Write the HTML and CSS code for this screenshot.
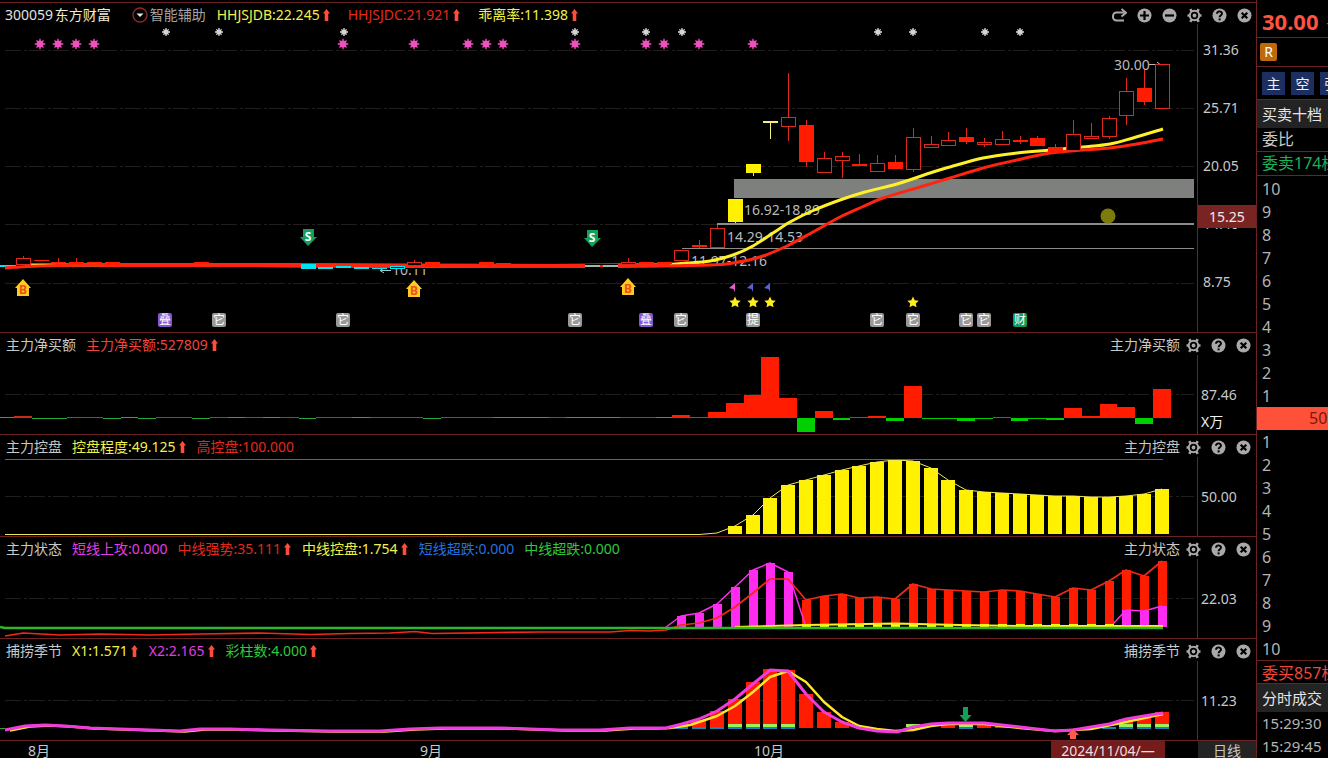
FILE: index.html
```html
<!DOCTYPE html>
<html lang="zh-CN">
<head>
<meta charset="utf-8">
<title>300059 东方财富</title>
<link rel="stylesheet" href="styles.css">
</head>
<body>
<svg class="defs" aria-hidden="true">
  <defs>
    <symbol id="i-up" viewBox="0 0 9 12"><path d="M4.500 0 8 4.500H6.300V12H2.700V4.500H1Z" fill="#ff4c3d"/></symbol>
    <symbol id="i-redo" viewBox="0 0 15 15"><path d="M12 12.500H4.500A3.500 3.500 0 0 1 1 9V8A3.500 3.500 0 0 1 4.500 4.600H12" fill="none" stroke="currentColor" stroke-width="2"/><path d="M9.500 1 14 4.700 9.500 8.500" fill="none" stroke="currentColor" stroke-width="2"/></symbol>
    <symbol id="i-plus" viewBox="0 0 15 15"><circle cx="7.500" cy="7.500" r="7" fill="currentColor"/><path d="M7.500 3V12M3 7.500H12" stroke="#000" stroke-width="2.200"/></symbol>
    <symbol id="i-minus" viewBox="0 0 15 15"><circle cx="7.500" cy="7.500" r="7" fill="currentColor"/><path d="M3 7.500H12" stroke="#000" stroke-width="2.200"/></symbol>
    <symbol id="i-gear" viewBox="0 0 15 15"><circle cx="7.500" cy="7.500" r="4.700" fill="none" stroke="currentColor" stroke-width="2"/><path d="M4.600 3.400 3.300 1.200M10.400 3.400 11.700 1.200M4.600 11.600 3.300 13.800M10.400 11.600 11.700 13.800M2.800 7.500H.5M12.200 7.500H14.500" stroke="currentColor" stroke-width="2.600"/><circle cx="7.500" cy="7.500" r="1.900" fill="currentColor"/></symbol>
    <symbol id="i-help" viewBox="0 0 15 15"><circle cx="7.500" cy="7.500" r="7" fill="currentColor"/><path d="M5 5.800C5 2.600 10 2.600 10 5.600 10 7.300 7.600 7.300 7.600 9.300" fill="none" stroke="#000" stroke-width="1.900"/><rect x="6.600" y="10.400" width="2" height="2" fill="#000"/></symbol>
    <symbol id="i-close" viewBox="0 0 15 15"><circle cx="7.500" cy="7.500" r="7" fill="currentColor"/><path d="M4.700 4.700 10.300 10.300M10.300 4.700 4.700 10.300" stroke="#000" stroke-width="2.200"/></symbol>
    <symbol id="i-drop" viewBox="0 0 16 16"><circle cx="8" cy="8" r="7" fill="none" stroke="#8e2626" stroke-width="1.400"/><path d="M4.500 6.500H11.500L8 10Z" fill="#e8e8e8"/></symbol>
  </defs>
</svg>
<div class="app">
  <main class="charts">
    <section class="panel main-panel">
      <header class="head">
        <h1 class="code">300059 <span class="name">东方财富</span></h1>
        <button class="assist" type="button"><svg class="drop"><use href="#i-drop"/></svg>智能辅助</button>
        <span class="c-yellow">HHJSJDB:22.245<svg class="up"><use href="#i-up"/></svg></span>
        <span class="c-red">HHJSJDC:21.921<svg class="up"><use href="#i-up"/></svg></span>
        <span class="c-yellow">乖离率:11.398<svg class="up"><use href="#i-up"/></svg></span>
        <div class="tools">
          <button type="button" aria-label="撤销"><svg><use href="#i-redo"/></svg></button>
          <button type="button" aria-label="放大"><svg><use href="#i-plus"/></svg></button>
          <button type="button" aria-label="缩小"><svg><use href="#i-minus"/></svg></button>
          <button type="button" aria-label="设置"><svg><use href="#i-gear"/></svg></button>
          <button type="button" aria-label="帮助"><svg><use href="#i-help"/></svg></button>
          <button type="button" aria-label="关闭"><svg><use href="#i-close"/></svg></button>
        </div>
      </header>
      <div class="body">
        <svg class="plot" id="kline" viewBox="0 24 1197 308"></svg>
        <div class="axis"><span>31.36</span><span>25.71</span><span>20.05</span><span>14.40</span><span>8.75</span><b class="cursor">15.25</b></div>
      </div>
    </section>
    <section class="panel">
      <header class="head">
        <h2>主力净买额</h2>
        <span class="c-light">主力净买额:527809<svg class="up"><use href="#i-up"/></svg></span>
        <div class="tools"><span>主力净买额</span>
          <button type="button" aria-label="设置"><svg><use href="#i-gear"/></svg></button>
          <button type="button" aria-label="帮助"><svg><use href="#i-help"/></svg></button>
          <button type="button" aria-label="关闭"><svg><use href="#i-close"/></svg></button>
        </div>
      </header>
      <div class="body">
        <svg class="plot" id="netbuy" viewBox="0 355 1197 79"></svg>
        <div class="axis"><span>87.46</span><span class="unit">X万</span></div>
      </div>
    </section>
    <section class="panel">
      <header class="head">
        <h2>主力控盘</h2>
        <span class="c-yellow">控盘程度:49.125<svg class="up"><use href="#i-up"/></svg></span>
        <span class="c-red">高控盘:100.000</span>
        <div class="tools"><span>主力控盘</span>
          <button type="button" aria-label="设置"><svg><use href="#i-gear"/></svg></button>
          <button type="button" aria-label="帮助"><svg><use href="#i-help"/></svg></button>
          <button type="button" aria-label="关闭"><svg><use href="#i-close"/></svg></button>
        </div>
      </header>
      <div class="body">
        <svg class="plot" id="control" viewBox="0 457 1197 79"></svg>
        <div class="axis"><span>50.00</span></div>
      </div>
    </section>
    <section class="panel">
      <header class="head">
        <h2>主力状态</h2>
        <span class="c-magenta">短线上攻:0.000</span>
        <span class="c-red">中线强势:35.111<svg class="up"><use href="#i-up"/></svg></span>
        <span class="c-yellow">中线控盘:1.754<svg class="up"><use href="#i-up"/></svg></span>
        <span class="c-blue">短线超跌:0.000</span>
        <span class="c-green">中线超跌:0.000</span>
        <div class="tools"><span>主力状态</span>
          <button type="button" aria-label="设置"><svg><use href="#i-gear"/></svg></button>
          <button type="button" aria-label="帮助"><svg><use href="#i-help"/></svg></button>
          <button type="button" aria-label="关闭"><svg><use href="#i-close"/></svg></button>
        </div>
      </header>
      <div class="body">
        <svg class="plot" id="state" viewBox="0 559 1197 79"></svg>
        <div class="axis"><span>22.03</span></div>
      </div>
    </section>
    <section class="panel">
      <header class="head">
        <h2>捕捞季节</h2>
        <span class="c-yellow">X1:1.571<svg class="up"><use href="#i-up"/></svg></span>
        <span class="c-magenta">X2:2.165<svg class="up"><use href="#i-up"/></svg></span>
        <span class="c-green">彩柱数:4.000<svg class="up"><use href="#i-up"/></svg></span>
        <div class="tools"><span>捕捞季节</span>
          <button type="button" aria-label="设置"><svg><use href="#i-gear"/></svg></button>
          <button type="button" aria-label="帮助"><svg><use href="#i-help"/></svg></button>
          <button type="button" aria-label="关闭"><svg><use href="#i-close"/></svg></button>
        </div>
      </header>
      <div class="body">
        <svg class="plot" id="season" viewBox="0 661 1197 79"></svg>
        <div class="axis"><span>11.23</span></div>
      </div>
    </section>
    <footer class="dates">
      <span>8月</span><span>9月</span><span>10月</span><span class="today">2024/11/04/—</span><span></span><button class="period" type="button">日线</button>
    </footer>
  </main>
  <aside class="side">
    <div class="price">30.00 <small>+</small></div>
    <div class="badges"><span class="r">R</span></div>
    <div class="tabs"><button type="button">主</button><button type="button">空</button><button type="button">强</button></div>
    <h3 class="side-title">买卖十档</h3>
    <div class="ratio">委比</div>
    <div class="sell">委卖174档</div>
    <ol class="levels asks"><li>10</li><li>9</li><li>8</li><li>7</li><li>6</li><li>5</li><li>4</li><li>3</li><li>2</li><li>1</li></ol>
    <div class="band">50</div>
    <ol class="levels"><li>1</li><li>2</li><li>3</li><li>4</li><li>5</li><li>6</li><li>7</li><li>8</li><li>9</li><li>10</li></ol>
    <div class="buy">委买857档</div>
    <h3 class="side-title">分时成交</h3>
    <ol class="ticks"><li>15:29:30</li><li>15:29:45</li></ol>
  </aside>
</div>
<script src="charts.js"></script>
</body>
</html>
```

FILE: styles.css
```css
* { box-sizing: border-box; }
body {
  margin: 0;
  background: #000;
  color: #c8c8c8;
  font: 14px/20px "Noto Sans", "Noto Sans CJK SC", sans-serif;
  overflow: hidden;
}
h1, h2, h3, ol { margin: 0; padding: 0; font: inherit; list-style: none; }
button { margin: 0; padding: 0; border: 0; background: none; color: inherit; font: inherit; }
.defs { position: absolute; width: 0; height: 0; }
.app { display: grid; grid-template-columns: minmax(0, 1fr) 72px; min-height: 100vh; }
.charts { padding-top: 2px; }

.panel { border-bottom: 1px solid #6b2323; }
.main-panel { border-top: 1px solid #6b2323; }
.head {
  display: flex;
  align-items: center;
  gap: 10px;
  height: 22px;
  padding: 2px 5px 0 6px;
  white-space: nowrap;
}
.main-panel .head { height: 21px; gap: 17px; padding: 3px 4px 0 5px; }
.code { margin-right: 4px; word-spacing: -2px; color: #e2e2e2; }
.name { color: #f3ead2; }
.assist, .head > span { display: flex; align-items: center; }
.assist { gap: 2px; margin-right: -6px; color: #a2a2a2; }
.drop { width: 16px; height: 16px; }
.up { width: 9px; height: 12px; margin-left: 2px; }
.tools { display: flex; align-items: center; gap: 10px; margin-left: auto; color: #a9a9a9; }
.tools span { margin-right: -4px; color: #c8c8c8; }
.tools button, .tools svg { display: block; width: 15px; height: 15px; }
.c-yellow { color: #f1f14a; }
.c-red { color: #e2291d; }
.c-light { color: #f0453c; }
.c-magenta { color: #e43ce4; }
.c-blue { color: #2472e0; }
.c-green { color: #2fc93b; }

.body { display: grid; grid-template-columns: minmax(0, 1fr) 59px; }
.plot { display: block; width: 100%; }
.axis {
  position: relative;
  display: flex;
  flex-direction: column;
  gap: 7px;
  padding: 30px 0 0 3px;
  border-left: 1px solid #6b2323;
}
.main-panel .axis { gap: 38px; padding: 16px 0 0 5px; }
.unit { color: #f0f0f0; }
.cursor {
  position: absolute;
  top: 181px;
  left: 0;
  right: 0;
  background: #7a2323;
  color: #f2e6e6;
  font-weight: normal;
  line-height: 23px;
  text-align: center;
}
.dates {
  display: grid;
  grid-template-columns: 392fr 334fr 297fr 114px 33fr 58px;
  height: 17px;
  padding-left: 28px;
  line-height: 20px;
}
.today { background: #741c1c; color: #f0dcdc; text-align: center; }
.period { background: #242424; line-height: 20px; }

.plot text { fill: #b9b9b9; }
.plot .tag { fill: #fff; font-size: 12px; text-anchor: middle; }
.plot .mark { font-size: 12px; font-weight: bold; text-anchor: middle; }
.plot .sell-mark { fill: #fff; }
.plot .buy-mark { fill: #f0501a; }

.side {
  border-left: 1px solid #6b2323;
  overflow: hidden;
  white-space: nowrap;
  font-size: 16px;
  line-height: 23px;
}
.side > div, .side-title { padding-left: 5px; }
.side > .price {
  height: 38px;
  padding-top: 5px;
  border-bottom: 1px solid #6b2323;
  color: #ff5240;
  font-size: 22px;
  font-weight: bold;
  line-height: 32px;
}
.price small { margin-left: 2px; font-size: 16px; font-weight: normal; }
.side > .badges { height: 29px; padding: 5px 0 0 3px; border-bottom: 1px solid #6b2323; }
.r {
  display: block;
  width: 17px;
  background: #bd6a0b;
  color: #fff;
  border-radius: 2px;
  font-size: 14px;
  line-height: 18px;
  text-align: center;
}
.tabs { display: flex; gap: 6px; height: 33px; padding-top: 5px; border-bottom: 1px solid #6b2323; }
.tabs button { flex: none; width: 23px; height: 23px; background: #1d2f60; color: #f0f0f0; font-size: 14px; }
.side-title { background: #232323; color: #e6e6e6; font-size: 15px; line-height: 28px; }
.ratio { height: 24px; border-bottom: 1px solid #6b2323; }
.sell { height: 24px; border-bottom: 1px solid #6b2323; color: #16b45a; }
.levels li, .ticks li { padding-left: 5px; color: #b4b4b4; }
.levels li { height: 23px; line-height: 25px; }
.asks { padding-top: 1px; }
.side > .band { padding-left: 52px; background: #ff5039; color: #7a1710; line-height: 23px; }
.buy { height: 24px; border-top: 1px solid #6b2323; border-bottom: 1px solid #6b2323; color: #f2463a; line-height: 24px; }
.ticks { font-size: 15px; }
```

FILE: charts.js
```js
const NS = 'http://www.w3.org/2000/svg';
const RED = '#ff1c00', YELLOW = '#fff100', MAGENTA = '#ff2cf0', GREEN = '#00d000', CYAN = '#00e5f5', LINE = '#e0281c';
const X = i => Math.round(22.8 + 17.8 * i);

function add(svg, tag, attrs, text) {
  const el = document.createElementNS(NS, tag);
  for (const k in attrs) el.setAttribute(k, attrs[k]);
  if (text) el.textContent = text;
  svg.appendChild(el);
}
const rect = (s, x, y, w, h, fill) => add(s, 'rect', { x, y, width: w, height: h, fill });
const path = (s, d, fill) => add(s, 'path', { d, fill });
const line = (s, pts, stroke, width) =>
  add(s, 'polyline', { points: pts, fill: 'none', stroke, 'stroke-width': width, 'stroke-linejoin': 'round' });
const text = (s, x, y, str, cls) => add(s, 'text', { x, y, class: cls || '' }, str);
const grid = (s, y) =>
  add(s, 'path', { d: `M5 ${y + .5}H1194`, stroke: '#221e1b', 'stroke-dasharray': '16 3 3 2' });

function smooth(svg, pts, stroke, width) {
  let d = `M${pts[0]}`;
  for (let i = 0; i < pts.length - 1; i++) {
    const a = pts[i - 1] || pts[i], b = pts[i], c = pts[i + 1], e = pts[i + 2] || c;
    d += `C${b[0] + (c[0] - a[0]) / 6} ${b[1] + (c[1] - a[1]) / 6} ${c[0] - (e[0] - b[0]) / 6} ${c[1] - (e[1] - b[1]) / 6} ${c}`;
  }
  add(svg, 'path', { d, fill: 'none', stroke, 'stroke-width': width });
}

function spark(svg, x, y, r, color) {
  const k = r * .66;
  add(svg, 'path', {
    d: `M${x} ${y - r}V${y + r}M${x - r} ${y}H${x + r}M${x - k} ${y - k}L${x + k} ${y + k}M${x + k} ${y - k}L${x - k} ${y + k}`,
    stroke: color, 'stroke-width': 1.3
  });
  add(svg, 'circle', { cx: x, cy: y, r: r * .64, fill: color });
}

// Price panel
const k = document.getElementById('kline');
[50, 108, 166, 224, 283].forEach(y => grid(k, y));
rect(k, 734, 179, 460, 19, '#7e807e');
rect(k, 717, 223, 477, 2, '#8c8c8c');
rect(k, 682, 248, 512, 1, '#8c8c8c');
text(k, 744, 215, '16.92-18.89');
text(k, 727, 242, '14.29-14.53');
text(k, 691, 266, '11.97-12.16');
text(k, 1114, 70, '30.00');
add(k, 'path', { d: 'M1149 64.500H1160M1157 62 1160 64.500 1157 67', stroke: '#b9b9b9', fill: 'none' });
text(k, 392, 275, '10.11');
rect(k, 390, 262, 40, 7, '#000');
add(k, 'path', { d: 'M391 270.500H380M384 268 380 270.500 384 273', stroke: '#9fc8cc', fill: 'none' });

line(k, '0,266 16,266', CYAN, 2);
smooth(k, [[30, 265], [60, 265], [110, 265], [400, 266], [640, 265], [687, 263], [710, 261], [733, 255], [753, 246], [773, 233], [790, 222], [812, 211], [840, 200], [865, 192], [897, 184], [933, 172], [950, 167], [983, 158], [1017, 153], [1050, 150], [1083, 147], [1110, 144], [1133, 138], [1163, 129]], '#fff02a', 3);
smooth(k, [[5, 268], [40, 266], [100, 265], [300, 265], [450, 266], [640, 266], [710, 265], [733, 263], [760, 257], [787, 246], [813, 232], [840, 217], [862, 207], [883, 198], [920, 187], [950, 178], [983, 168], [1017, 160], [1050, 153], [1083, 150], [1110, 148], [1137, 144], [1163, 139]], '#ff2410', 3);
line(k, '100,265 300,265 420,265.5 585,266', '#ff2410', 4);
line(k, '618,266 670,265', '#ff2410', 4);
rect(k, 585, 264, 33, 4, '#000');
rect(k, 585, 265, 33, 2, '#9ab8b0');
rect(k, 600, 265, 3, 2, RED);

// [index, top, bottom, high, low, style]: h hollow, f filled, y yellow, c cyan
[[0, 258, 265, 256, 265, 'h'], [1, 260, 261, 260, 261, 'f'], [2, 262, 263, 258, 263, 'f'], [3, 262, 264, 258, 264, 'f'], [4, 262, 263, 262, 263, 'f'],
 [5, 262, 265, 262, 265, 'f'], [10, 262, 264, 262, 264, 'f'],
 [16, 264, 269, 264, 269, 'c'], [17, 267, 269, 267, 269, 'c'], [18, 266, 268, 266, 268, 'c'], [19, 267, 269, 267, 269, 'c'], [20, 268, 269, 268, 269, 'c'], [21, 266, 269, 266, 269, 'k'],
 [22, 262, 266, 260, 266, 'h'], [23, 262, 267, 262, 267, 'f'], [26, 262, 265, 262, 265, 'f'], [27, 263, 266, 263, 266, 'f'],
 [34, 262, 265, 258, 265, 'h'], [35, 262, 264, 262, 264, 'f'], [36, 262, 264, 262, 264, 'f'], [37, 250, 261, 250, 261, 'h'], [38, 245, 247, 240, 248, 'f'],
 [39, 228, 248, 225, 248, 'h'], [40, 199, 222, 199, 223, 'y'], [41, 164, 173, 164, 176, 'y'], [42, 121, 123, 121, 139, 't'],
 [43, 117, 127, 73, 141, 'h'], [44, 125, 162, 120, 167, 'f'], [45, 158, 173, 152, 173, 'h'], [46, 156, 161, 152, 178, 'h'],
 [47, 164, 166, 154, 166, 'f'], [48, 163, 172, 155, 172, 'h'], [49, 162, 169, 155, 169, 'f'], [50, 137, 170, 128, 172, 'h'],
 [51, 144, 148, 136, 148, 'h'], [52, 140, 146, 132, 146, 'h'], [53, 137, 142, 128, 144, 'f'], [54, 142, 145, 138, 147, 'h'],
 [55, 139, 145, 131, 145, 'h'], [56, 140, 142, 136, 144, 'f'], [57, 138, 146, 136, 146, 'f'], [58, 147, 153, 144, 153, 'f'],
 [59, 134, 151, 120, 151, 'h'], [60, 136, 139, 123, 139, 'h'], [61, 118, 137, 116, 139, 'h'], [62, 91, 116, 78, 125, 'h'],
 [63, 88, 102, 70, 105, 'f'], [64, 64, 109, 64, 109, 'h']
].forEach(([i, top, bottom, high, low, style]) => {
  const x = X(i);
  const color = { h: LINE, f: RED, y: YELLOW, c: CYAN, k: CYAN, t: '#f4ee7a' }[style];
  if (low - high > bottom - top) rect(k, x, high, 1, low - high, style === 'f' ? LINE : color);
  if (style === 'h' || style === 'k')
    add(k, 'rect', { x: x - 6.5, y: top + .5, width: 14, height: bottom - top - 1, fill: '#000', stroke: color });
  else rect(k, x - 7, top, 15, bottom - top, color);
});
add(k, 'circle', { cx: 1108, cy: 216, r: 7.5, fill: '#7d7b0c' });

[166, 219, 344, 575, 646, 682, 878, 913, 985, 1020].forEach(x => spark(k, x, 32, 4, '#d4d4d4'));
[40, 58, 76, 94, 343, 414, 468, 486, 503, 575, 646, 664, 699, 753].forEach(x => spark(k, x, 44, 5.3, '#ee50be'));

[[308, 237], [592, 238]].forEach(([x, y]) => {
  path(k, `M${x - 5} ${y - 8}H${x + 6}V${y}H${x + 9}L${x} ${y + 9}L${x - 8} ${y}H${x - 5}Z`, '#12a05c');
  text(k, x, y + 4, 'S', 'mark sell-mark');
});
[[23, 288], [414, 289], [628, 287]].forEach(([x, y]) => {
  path(k, `M${x} ${y - 9}L${x + 8} ${y}H${x + 6}V${y + 8}H${x - 6}V${y}H${x - 8}Z`, '#ffcb20');
  text(k, x, y + 6, 'B', 'mark buy-mark');
});
[735, 753, 770, 913].forEach(x => {
  let d = 'M';
  for (let n = 0; n < 10; n++) {
    const a = -Math.PI / 2 + n * Math.PI / 5, r = n % 2 ? 2.9 : 6;
    d += `${x + r * Math.cos(a)} ${302.5 + r * Math.sin(a)} `;
  }
  path(k, d + 'Z', '#ffee1c');
});
[[730, '#e45fd0'], [748, '#5a62d8'], [765, '#5a62d8']].forEach(([x, c]) =>
  path(k, `M${x + 5} 283V292L${x + 3.5} 289L${x - 1} 288Z`, c));

[[165, '叠', '#8257cf'], [219, '它', '#999'], [343, '它', '#999'], [575, '它', '#999'], [646, '叠', '#8257cf'], [681, '它', '#999'],
 [753, '提', '#999'], [877, '它', '#999'], [913, '它', '#999'], [966, '它', '#999'], [984, '它', '#999'], [1020, '财', '#0f9d5a']
].forEach(([x, s, c]) => {
  add(k, 'rect', { x: x - 7, y: 313, width: 14, height: 14, rx: 2, fill: c });
  text(k, x, 324, s, 'tag');
});

// Net buying
const n = document.getElementById('netbuy');
grid(n, 394);
[[0, 14, 'g', 0], [14, 32, 'r', -1], [32, 67, 'g', 1], [67, 103, 'r', 0], [103, 121, 'g', 1], [121, 138, 'g', 0], [138, 156, 'g', 1],
 [156, 192, 'r', 0], [192, 210, 'g', 1], [210, 228, 'r', 0], [228, 245, 'g', 0], [245, 263, 'r', 0], [263, 280, 'g', 0], [280, 299, 'r', 0],
 [299, 316, 'g', 1], [316, 352, 'r', 0], [352, 370, 'g', 0], [370, 423, 'r', 0], [423, 441, 'g', 1], [441, 493, 'r', 0], [493, 549, 'g', 0],
 [549, 566, 'r', 0], [566, 620, 'g', 0], [620, 656, 'r', 0], [656, 673, 'g', 0]
].forEach(([a, b, c, o]) => rect(n, a, 417 + o, b - a, o < 0 ? 2 : 1, c === 'g' ? '#28a83a' : '#c92a1e'));
[415, 417, 412, 403, 395, 357, 398, 432, 411, 420, 417, 416, 421, 386, 419, 419, 421, 419, 417, 421, 419, 420, 408, 416, 404, 407, 424, 389]
  .forEach((y, j) => {
    const x = X(37 + j) - 9, w = X(38 + j) - X(37 + j);
    if (y < 418) rect(n, x, y, w, 418 - y, RED);
    else rect(n, x, 418, w, y - 418, GREEN);
  });

// Control degree
const c = document.getElementById('control');
grid(c, 496);
const degree = [526, 515, 498, 485, 480, 475, 470, 466, 462, 460, 461, 468, 480, 490, 492, 493, 494, 495, 496, 496, 497, 497, 496, 494, 489];
degree.forEach((y, j) => rect(c, X(40 + j) - 7, y, 14, 534 - y, YELLOW));
line(c, '5,534.5 699,534.5 717,533 ' + degree.map((y, j) => `${X(40 + j)},${y}`).join(' '), '#f0e860', 1);
rect(c, 5, 459, 1158, 1, '#e8301e');

// Strength state
const s = document.getElementById('state');
grid(s, 598);
const rise = [616, 613, 604, 587, 570, 563, 572];
rise.forEach((y, j) => rect(s, X(37 + j) - 4, y, 9, 627 - y, MAGENTA));
const strong = [600, 596, 594, 598, 597, 599, 584, 589, 590, 591, 592, 590, 591, 594, 597, 588, 590, 581, 570, 576, 561];
strong.forEach((y, j) => rect(s, X(44 + j) - 4, y, 9, 626 - y, RED));
[[62, 610], [63, 611], [64, 606]].forEach(([i, y]) => rect(s, X(i) - 4, y, 9, 627 - y, MAGENTA));
line(s, '666,627 ' + rise.map((y, j) => `${X(37 + j)},${y}`).join(' ') + ' 806,627', MAGENTA, 1.5);
line(s, '1113,624 1126,610 1144,611 1162,606', MAGENTA, 1.5);
line(s, '5,636 23,633 60,635 100,634 150,635 200,634 260,633 310,634.5 350,633.5 390,633 415,631.5 432,633.5 540,632 610,632 630,630.5 650,631 666,630 681,625 699,623 717,618 735,607 753,593 770,579 788,579 '
  + strong.map((y, j) => `${X(44 + j)},${y}`).join(' '), '#f02a14', 1.7);
for (let i = 44; i < 62; i++) rect(s, X(i) - 4, 624, 9, 3, '#f6ff00');
line(s, '735,627 770,626 806,625 895,623.5 960,625 1020,626 1163,626', '#ffee20', 2);
line(s, '0,627 5,628 1163,628', '#2fb62a', 2.6);

// Season
const p = document.getElementById('season');
grid(p, 700);
[[37, 725], [38, 720], [39, 711], [40, 699], [41, 682], [42, 669], [43, 670], [44, 694], [45, 712], [46, 722], [52, 724], [54, 724], [55, 725], [62, 719], [63, 716], [64, 712]]
  .forEach(([i, y]) => rect(p, X(i) - 7, y, 14, 728 - y, RED));
[37, 38, 39, 40, 41, 42, 43, 53, 61, 62, 63, 64].forEach(i => rect(p, X(i) - 7, 727, 14, 2, '#1585b5'));
[40, 41, 42, 43, 50, 53, 62, 63, 64].forEach(i => rect(p, X(i) - 7, 724, 14, 3, '#9cf05c'));
rect(p, 0, 728, 5, 1, '#28a83a');
const left = [[5, 730], [25, 726], [45, 725], [65, 726], [90, 728], [150, 730], [180, 731], [200, 729], [230, 729], [270, 730], [330, 731], [380, 731], [410, 729], [440, 728], [500, 728], [560, 730], [600, 730], [630, 728], [650, 728]];
line(p, left.map(([x, y]) => [x + 5, y + .5]).concat([[670, 728], [690, 725], [717, 716], [735, 706], [753, 692], [770, 677], [788, 671], [806, 682], [824, 702], [842, 717], [859, 726], [877, 729], [895, 731], [913, 730], [931, 726], [948, 724], [984, 724], [1020, 728], [1055, 731], [1091, 729], [1126, 722], [1163, 714]]).join(' '), '#ffe628', 2.5);
line(p, left.concat([[666, 728], [682, 724], [699, 719], [717, 711], [735, 699], [753, 684], [770, 670], [788, 671], [806, 694], [824, 712], [842, 722], [859, 728], [877, 731], [897, 732], [913, 727], [931, 724], [948, 723], [966, 723], [984, 723], [1002, 725], [1020, 727], [1037, 729], [1055, 731], [1073, 730], [1091, 727], [1109, 724], [1126, 719], [1144, 716], [1163, 713]]).join(' '), '#f03cdc', 3);
path(p, 'M963 707H968V715H971.500L965.500 722L959.500 715H963Z', '#0fa05a');
path(p, 'M1073 729L1079 735H1076V739H1070V735H1067Z', '#ff5a4a');
```
